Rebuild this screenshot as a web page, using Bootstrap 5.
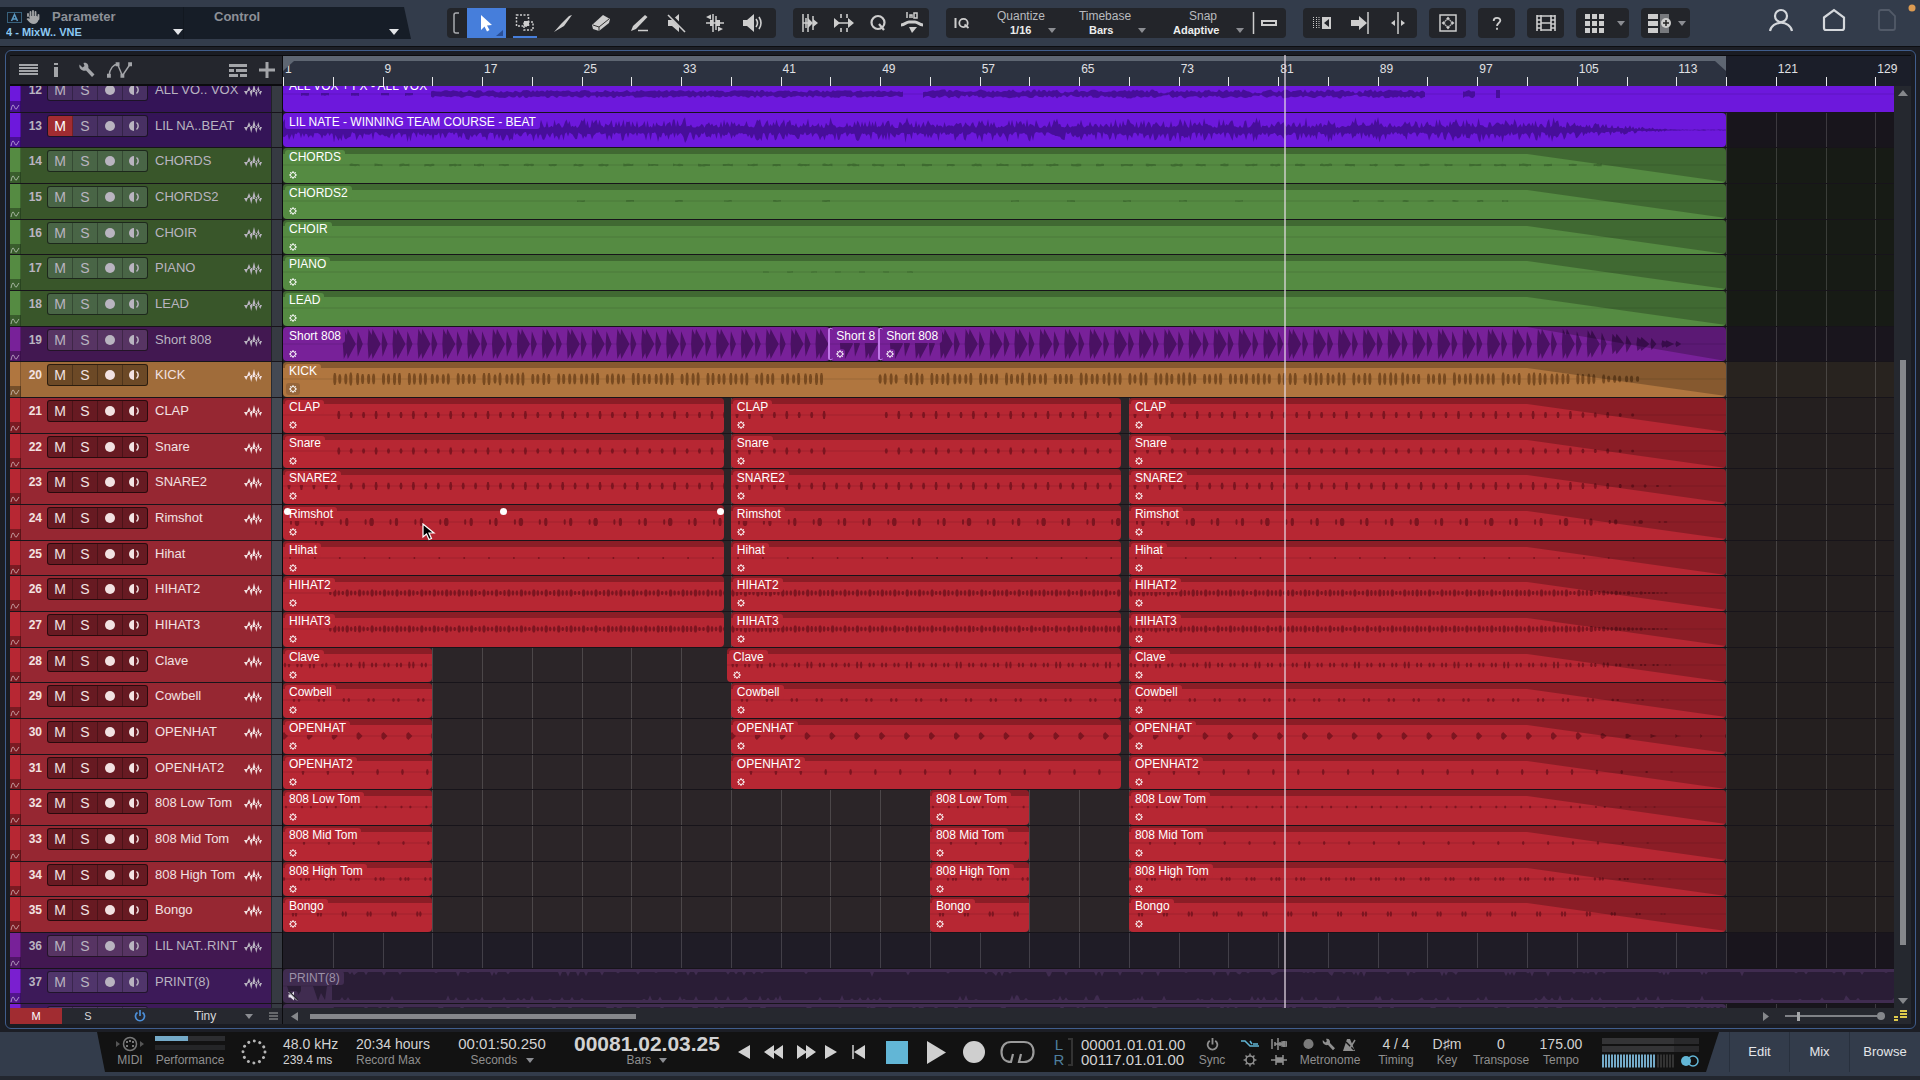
<!DOCTYPE html>
<html lang="en" data-bs-theme="dark">
<head>
<meta charset="utf-8">
<meta name="viewport" content="width=device-width, initial-scale=1">
<title>Arrange view</title>
<link href="https://cdn.jsdelivr.net/npm/bootstrap@5.3.0/dist/css/bootstrap.min.css" rel="stylesheet">
<style>
  body{font-family:"Liberation Sans",Arial,sans-serif;font-size:12px;line-height:16px;background:#1c1e25;color:#c9cbd0;overflow:hidden}
  button,select,input{font-family:inherit;color:inherit}
  button{background:none;border:0;padding:0;display:flex;align-items:center;justify-content:center;flex-shrink:0}
  select{appearance:none;background:none;border:0;padding:0;outline:0;font-size:12px;line-height:16px}
  svg{display:block;flex:none}
  .caret{width:8px;height:5px;fill:#8b8d92}
  /* top bar */
  .topbar{height:47px;background:#333c4b;border-bottom:1px solid #0d0e12;padding-top:8px}
  .parambox{width:411px;height:32px;margin-top:-1px;background:#161d27;clip-path:polygon(0 0,404px 0,100% 100%,0 100%);color:#8d9097;font-weight:bold;font-size:13px}
  .parambox .half{height:32px;padding:2px 0 0 6px}
  .parambox .half:first-child{width:184px;border-right:1px solid #121820}
  .parambox select{font-size:11px;line-height:14px;font-weight:bold;color:#8cc9f2}
  .parambox .caret{fill:#e3e5e8;width:10px;height:6px}
  .toolset{height:30px;background:#23252a;border-radius:4px;color:#cdcdcd;margin-left:17px;flex-shrink:0}
  .toolset.lead-set{margin-left:36px}
  .toolset.solo{margin-left:12px}
  .toolset button{width:38px;height:30px}
  .toolset.narrow button{width:34px}
  .toolset.solo button{width:37px}
  .toolset button.picked{width:39px;background:#467edb;color:#fff}
  .toolset button.next{background:linear-gradient(#467edb,#467edb) bottom/24px 2px no-repeat}
  .pickbox{text-align:center;width:82px}
  .pickbox label{display:block;line-height:14px;height:14px;color:#b9bbbf}
  .pickbox select{font-size:11px;font-weight:bold;color:#eceded;line-height:15px}
  /* panel */
  .frame{flex:1 1 0;margin:3px 4px 3px 5px;border:1px solid #405d8c;border-radius:6px;padding:4px;min-height:0;background:#1a1c23}
  .side{width:273px;border-right:1px solid #0b0b0e;min-height:0}
  .sidehead{height:31px;background:#24262d;border-bottom:2px solid #0b0b0e;border-top:1px solid #0b0b0e;color:#a3a5a9;padding:0 7px 0 9px}
  .listbody{overflow:hidden;min-height:0;flex:1 1 0}
  .listbody .stack{margin-top:-9px}
  .trk,.lane{height:36px;border-bottom:1px solid #17141a}
  .trk:nth-child(3n+2),.lane:nth-child(3n+2){height:35px}
  .trk{display:flex;background:var(--head);color:#b9b4c0}
  .trk.lit{color:#f2e2e2}
  .tag{width:11px;border-right:1px solid #0004;background:linear-gradient(#0000 24px,#0005 24px),var(--clip);padding-top:27px;color:#fff8}
  .num{width:21px;text-align:right;font-weight:bold;line-height:24px;padding-top:1px}
  .btnset{width:101px;height:22px;margin:2px 7px 0 5px;background:var(--box);border:1px solid #0009;border-radius:3px;overflow:hidden}
  .btnset button{flex:1 1 0;font-size:14px;line-height:20px;border-right:1px solid #0004}
  .btnset button:last-child{border-right:0}
  .btnset .on{background:#a12c31;color:#fff}
  .nm{width:89px;font-size:13px;line-height:24px;padding-top:1px;white-space:nowrap}
  .wvi{margin-top:7px}
  .meter{width:11px;background:#363a42;margin-left:auto;border-left:1px solid #0006}
  .lit .meter{background:#444953}
  .status{height:16px;background:#26282f;color:#d7d8da}
  .status button{width:52px;height:16px;font-size:11px}
  .status .on{background:#a12c31;color:#fff}
  /* timeline */
  .ruler{height:31px;background:#1b1e29;border-top:1px solid #0b0b0e;padding-right:17px}
  .looped{background:linear-gradient(#5e6672 5px,#2c3240 5px);position:absolute;top:0;bottom:0;left:0}
  .tick{position:absolute;bottom:0;height:9px;width:1px;background:#e8e8ea}
  .barno{position:absolute;top:5px;padding-left:2px;color:#e0e1e4}
  .lane{position:relative;background:linear-gradient(90deg,var(--in) 0 var(--end),var(--out) var(--end))}
  .gridln{position:absolute;top:0;bottom:0;width:1px;background:#ffffff28}
  .clipbox{position:absolute;top:0;bottom:0;background:var(--clip);border-radius:4px;overflow:hidden;color:#fff}
  .clipbox .wave{position:absolute;left:0;top:0;width:100%;height:35px}
  .clipname{position:absolute;left:2px;top:2px;background:var(--clip);padding:0 4px;border-radius:3px;line-height:14px;white-space:nowrap}
  .gear{position:absolute;left:5px;top:22px;background:var(--clip);border-radius:3px}
  .boxed .gear{background:#966539;left:3px;padding:1px 2px;top:21px}
  .mutedclip{color:#9d91a8}
  .mutedclip .gear{color:#e8e4ec}
  .playhead{position:absolute;top:0;bottom:0;width:2px;background:#e6dae6a0;z-index:5}
  .handle{position:absolute;width:7px;height:7px;border-radius:50%;background:#fff;top:3px;margin-left:-3px;z-index:4}
  .pointer{position:absolute;top:18px;z-index:6}
  .seam{position:absolute;top:1px;bottom:1px;width:5px;margin-left:-2px;border:2px solid #c07ae6;border-width:1px 0 1px 2px;border-radius:2px;z-index:3}
  .vbar{width:17px;background:#25282f}
  .vtrack{width:6px}
  .thumb{background:#85878b}
  .hbar{height:16px;background:#26282f}
  .zoomer{appearance:none;width:92px;height:8px;background:linear-gradient(#808287,#808287) center/100% 2px no-repeat;margin:0}
  .zoomer::-webkit-slider-thumb{appearance:none;width:3px;height:9px;background:#a5a7aa}
  /* transport */
  .transport{height:48px;background:linear-gradient(#333c4b 44px,#23272f 44px)}
  .deck{margin-left:97px;height:40px;width:1622px;background:#121212;clip-path:polygon(0 0,100% 0,calc(100% - 13px) 100%,8px 100%);
    display:grid;align-items:center;justify-items:center;color:#d2d2d2;
    grid-template-columns:58px 70px 58px 73px 84px 124px 166px 28px 30px 32px 22px 34px 42px 37px 37px 51px 38px 108px 46px 30px 28px 74px 58px 44px 64px 56px 1fr}
  .cell{text-align:center;white-space:nowrap}
  .cell>*{height:16px;line-height:16px}
  .cap,.cap select{color:#8f8f8f}
  .val{font-size:14px}
  .clock{font-size:15px}
  .locator>*{height:15px;line-height:15px}
  .bigclock{font-size:21px;font-weight:bold}
  .viewbtn{width:60px;height:40px;border-left:1px solid #28303d;font-size:13px;color:#e4e6e9}
  .viewbtn:last-child{width:71px}
  .perf{width:70px;height:5px;background:linear-gradient(90deg,#74aac8 47%,#2c2d30 47%)}
  .perf.idle{background:#242527}
</style>
<script src="https://cdn.jsdelivr.net/npm/bootstrap@5.3.0/dist/js/bootstrap.bundle.min.js"></script>
</head>
<body class="vh-100 d-flex flex-column">

<svg width="0" height="0" class="position-absolute" aria-hidden="true">
  <symbol id="i-caret" viewBox="0 0 10 6"><path d="M0 0H10L5 6Z"/></symbol>
  <symbol id="i-squig" viewBox="0 0 10 7"><path d="M1 6C2 1 3 0 4 2S6 7 7 4L9 1" fill="none" stroke="currentColor"/></symbol>
  <symbol id="i-wave" viewBox="0 0 18 13"><path d="M0 7H4L2.200 11ZM3 7H7L5 2ZM5.500 6H9L7.200 13ZM8 8H12L10 0ZM10.500 6H14L12.300 13ZM12.500 8H16L14.300 2ZM14.500 7H18L16.200 11Z" fill="currentColor"/></symbol>
  <symbol id="i-mon" viewBox="0 0 12 12"><path d="M5 1A5 5 0 0 0 5 11Z" fill="currentColor"/><path d="M7.500 2.500A4.500 4.500 0 0 1 7.500 9.500" fill="none" stroke="currentColor" stroke-width="1.500"/></symbol>
  <symbol id="i-gear" viewBox="0 0 10 10"><circle cx="5" cy="5" r="2.500" fill="none" stroke="currentColor" stroke-width="1"/><path d="M5 1V2.500M5 7.500V9M1 5H2.500M7.500 5H9M2.200 2.200L3.300 3.300M6.700 6.700L7.800 7.800M7.800 2.200L6.700 3.300M3.300 6.700L2.200 7.800" stroke="currentColor" stroke-width=".9"/></symbol>
  <symbol id="i-mute" viewBox="0 0 20 20"><path d="M1 7H5L12 1V19L5 13H1Z" fill="currentColor"/><path d="M2 1L19 18" stroke="#23252a" stroke-width="3.500"/><path d="M1 2L18 19" stroke="currentColor" stroke-width="1.600"/></symbol>
  <symbol id="i-wrench" viewBox="0 0 16 16"><path d="M1 2.500L4 5.500 6 4 5 1C8 0 10.500 2.500 9.800 6L16 12.500 13.500 15 7.500 8.600C4 9.500 0 7 1 2.500Z" fill="currentColor"/></symbol>
  <symbol id="i-power" viewBox="0 0 12 12"><path d="M3.500 2.500A4.500 4.500 0 1 0 8.500 2.500M6 0V6" fill="none" stroke="currentColor" stroke-width="1.700"/></symbol>
</svg>

<header class="topbar d-flex align-items-start flex-shrink-0">
  <div class="parambox d-flex flex-shrink-0">
    <div class="half">
      <div class="d-flex align-items-center">
        <svg width="16" height="13" viewBox="0 0 16 13" class="me-1"><rect x="1.500" y="1.500" width="14" height="10" fill="none" stroke="#38617c"/><path d="M5.500 10L8.500 3.500L11.500 10M6.500 8H10.500" fill="none" stroke="#5b9ac4" stroke-width="1.500"/></svg>
        <svg width="14" height="14" viewBox="0 0 14 14" class="me-2"><path d="M2 6V4M4.500 7V2M7 7V1M9.500 7V2M12.500 9V5" stroke="#a5a6a8" stroke-width="1.800" stroke-linecap="round"/><path d="M3.500 6H10.500L13 7C13 11 11 14 8 14 5 14 3 12 .5 9L2 8 3.500 9Z" fill="#a5a6a8"/></svg>
        <label for="param" class="ms-1">Parameter</label></div>
      <div class="d-flex align-items-center"><select id="param"><option>4 - MixW.. VNE</option></select><svg class="caret ms-auto"><use href="#i-caret"/></svg></div>
    </div>
    <div class="half flex-fill pe-2"><label for="ctl" class="d-block ps-4">Control</label>
      <div class="d-flex align-items-center pe-1"><select id="ctl" class="flex-fill"><option></option></select><svg class="caret"><use href="#i-caret"/></svg></div></div>
  </div>

  <div class="toolset lead-set d-flex overflow-hidden pe-1">
    <svg width="20" height="30" viewBox="0 0 20 30"><path d="M12 5H9Q7 5 7 7V23Q7 25 9 25H12" fill="none" stroke="#a9abaf" stroke-width="1.500"/></svg>
    <button class="picked" aria-label="Arrow tool"><svg width="39" height="30" viewBox="0 0 39 30"><path d="M14 7L25 17 20 17.500 22.500 22 20 23.500 17.500 18.500 14 22Z" fill="#fff"/><path d="M36 22V28H29Z" fill="#2a4f96"/></svg></button>
    <button class="next" aria-label="Range tool"><svg width="20" height="20" viewBox="0 0 20 20"><path d="M1.500 2H13.500V13H1.500Z" fill="none" stroke="currentColor" stroke-width="1.500" stroke-dasharray="2 1.500"/><path d="M9 9H18V17H9Z" fill="none" stroke="currentColor" stroke-width="1.500" stroke-dasharray="2 1.500"/><path d="M9 8H14V13H9Z" fill="currentColor"/></svg></button>
    <button aria-label="Split tool"><svg width="20" height="20" viewBox="0 0 20 20"><path d="M19 2L11 13 8 11 16 3ZM8 11L11 13 1 19Z" fill="currentColor"/></svg></button>
    <button aria-label="Eraser tool"><svg width="20" height="20" viewBox="0 0 20 20"><path d="M1 12L12 2 19 6 18 10 8 18 2 16Z" fill="currentColor"/><path d="M2 12L8 14 18 6M8 14V18" stroke="#333" fill="none"/></svg></button>
    <button aria-label="Paint tool"><svg width="20" height="20" viewBox="0 0 20 20"><path d="M16 2L18.500 4 7 16 2 18 4 13Z" fill="currentColor"/><path d="M9 17.500H19" stroke="currentColor" stroke-width="1.500"/></svg></button>
    <button aria-label="Mute tool"><svg width="20" height="20"><use href="#i-mute"/></svg></button>
    <button aria-label="Bend tool"><svg width="20" height="20" viewBox="0 0 20 20"><path d="M8 1V19M11 3V17M1 10H19" stroke="currentColor" stroke-width="1.500"/><path d="M1 4L6 1.500V6.500ZM18 16L13 13.500V18.500ZM5 7H8V13H5ZM11 7H15V13H11Z" fill="currentColor"/></svg></button>
    <button aria-label="Listen tool"><svg width="20" height="20" viewBox="0 0 20 20"><path d="M0 7H4L11 1V19L4 13H0Z" fill="currentColor"/><path d="M13 6Q16 10 13 14M16 4Q20 10 16 16" fill="none" stroke="currentColor" stroke-width="1.600"/></svg></button>
  </div>

  <div class="toolset narrow d-flex">
    <button aria-label="Strip silence"><svg width="16" height="20" viewBox="0 0 16 20"><path d="M1 1V19M4 5V15M6 1V19M11 3V17M1 10H9" stroke="currentColor" stroke-width="1.500"/><path d="M6 5L11 10 6 15ZM11 6L16 10 11 14Z" fill="currentColor"/></svg></button>
    <button aria-label="Transients"><svg width="20" height="20" viewBox="0 0 20 20"><path d="M7 1V5M7 15V19M13 1V5M13 15V19M4 10H16" stroke="currentColor" stroke-width="1.600"/><path d="M0 5L6 10 0 15ZM14 5L20 10 14 15Z" fill="currentColor"/></svg></button>
    <button aria-label="Quantize"><svg width="18" height="18" viewBox="0 0 18 18"><circle cx="9" cy="8.500" r="6.500" fill="none" stroke="currentColor" stroke-width="2.200"/><path d="M10 10L15 16" stroke="currentColor" stroke-width="2.200"/></svg></button>
    <button aria-label="Macros"><svg width="24" height="24" viewBox="0 0 24 24"><path d="M1 14C5 14 6 11 9 11H15C18 11 19 14 23 14" fill="none" stroke="currentColor" stroke-width="3"/><path d="M9 16H17L12 22Z" fill="currentColor"/><path d="M7 1V7M10 7V4H12V7M14 2H17V7H14Z" stroke="currentColor" stroke-width="1.500" fill="none"/></svg></button>
  </div>

  <div class="toolset d-flex align-items-center">
    <svg width="16" height="12" viewBox="0 0 16 12" class="ms-2"><path d="M1.500 1V11" stroke="currentColor" stroke-width="2"/><circle cx="9.500" cy="6" r="4.200" fill="none" stroke="currentColor" stroke-width="1.800"/><path d="M10.500 7.500L14.500 11" stroke="currentColor" stroke-width="1.800"/></svg>
    <div class="pickbox ms-2 ps-1"><label for="qz">Quantize</label><div class="d-flex align-items-center"><select id="qz" class="ms-auto"><option>1/16</option></select><svg class="caret ms-3 me-1"><use href="#i-caret"/></svg></div></div>
    <div class="pickbox ms-1"><label for="tb">Timebase</label><div class="d-flex align-items-center"><select id="tb" class="ms-auto"><option>Bars</option></select><svg class="caret ms-4"><use href="#i-caret"/></svg></div></div>
    <div class="pickbox ms-3"><label for="sn">Snap</label><div class="d-flex align-items-center"><select id="sn" class="ms-auto"><option>Adaptive</option></select><svg class="caret ms-3"><use href="#i-caret"/></svg></div></div>
    <button aria-label="Autoscroll" class="me-1"><svg width="28" height="24" viewBox="0 0 28 24"><path d="M4.500 1V23" stroke="currentColor" stroke-width="1.500"/><rect x="13" y="10" width="14" height="4" fill="none" stroke="currentColor" stroke-width="2"/></svg></button>
  </div>

  <div class="toolset d-flex">
    <button aria-label="Ripple"><svg width="20" height="14" viewBox="0 0 20 14"><path d="M1.500 1V13M4.500 1V13M7 1V13" stroke="currentColor" stroke-dasharray="1 1"/><path d="M10 1H19V13H10Z" fill="currentColor"/><path d="M17 3V11L12 7Z" fill="#23252a"/></svg></button>
    <button aria-label="Follow"><svg width="20" height="22" viewBox="0 0 20 22"><path d="M1 8H9V4L17 11 9 18V14H1Z" fill="currentColor"/><path d="M18 0V22" stroke="currentColor" stroke-width="1.500"/></svg></button>
    <button aria-label="Cursor edit"><svg width="16" height="22" viewBox="0 0 16 22"><path d="M8 0V22" stroke="currentColor" stroke-width="1.500"/><path d="M5 8V14L1 11ZM11 8V14L15 11Z" fill="currentColor"/></svg></button>
  </div>
  <div class="toolset solo"><button aria-label="Fit"><svg width="18" height="18" viewBox="0 0 18 18"><rect x="1" y="1" width="16" height="16" fill="none" stroke="currentColor" stroke-width="1.500"/><circle cx="9" cy="9" r="3.500" fill="none" stroke="currentColor"/><path d="M9 2.500L11 5H7ZM9 15.500L11 13H7ZM2.500 9L5 7V11ZM15.500 9L13 7V11Z" fill="currentColor"/></svg></button></div>
  <div class="toolset solo"><button aria-label="Help"><svg width="10" height="15" viewBox="0 0 12 16"><path d="M2 5C2 0 10 0 10 4.500C10 7.500 6 7.500 6 11M6 13V15.500" fill="none" stroke="currentColor" stroke-width="2.200"/></svg></button></div>
  <div class="toolset solo"><button aria-label="Video"><svg width="20" height="18" viewBox="0 0 20 18"><path d="M1 1V17M19 1V17M5 1V17M15 1V17M5 2H15M5 9H15M5 16H15M1 2H5M1 6H5M1 10H5M1 14H5M15 2H19M15 6H19M15 10H19M15 14H19" stroke="currentColor" stroke-width="1.600"/></svg></button></div>
  <div class="toolset solo d-flex align-items-center pe-1"><button aria-label="Grid view"><svg width="19" height="19" viewBox="0 0 19 19"><path d="M0 0H5V5H0ZM7 0H12V5H7ZM14 0H19V5H14ZM0 7H5V12H0ZM7 7H12V12H7ZM14 7H19V12H14ZM0 14H5V19H0ZM7 14H12V19H7ZM14 14H19V19H14Z" fill="currentColor"/></svg></button><svg class="caret ms-1"><use href="#i-caret"/></svg></div>
  <div class="toolset solo d-flex align-items-center pe-1"><button aria-label="Add view"><svg width="24" height="19" viewBox="0 0 24 19"><path d="M0 0H10V5H0ZM0 7H10V12H0ZM0 14H10V19H0Z" fill="currentColor"/><path d="M12 0H21V19H12Z" fill="#77797d"/><circle cx="18" cy="9" r="5" fill="currentColor"/><path d="M18 6V12M15 9H21" stroke="#222" stroke-width="1.500"/></svg></button><svg class="caret"><use href="#i-caret"/></svg></div>
  <nav class="d-flex align-items-center ms-auto gap-4 pe-3 me-1">
    <button aria-label="Account"><svg width="26" height="24" viewBox="0 0 26 24"><circle cx="13" cy="8" r="6" fill="none" stroke="#d5d8dc" stroke-width="2.200"/><path d="M2 23C4 12 22 12 24 23" fill="none" stroke="#d5d8dc" stroke-width="2.200"/></svg></button>
    <button aria-label="Home" class="ms-1"><svg width="24" height="24" viewBox="0 0 24 24"><path d="M2 9.500L12 2 22 9.500V20Q22 22 20 22H4Q2 22 2 20Z" fill="none" stroke="#d5d8dc" stroke-width="2.200"/></svg></button>
    <button aria-label="Song" class="ms-2 me-1"><svg width="18" height="24" viewBox="0 0 18 24"><path d="M1 4Q1 2 3 2H11L17 8V20Q17 22 15 22H3Q1 22 1 20Z" fill="none" stroke="#525a68" stroke-width="1.800"/></svg></button>
  </nav>
  <svg width="8" height="8" viewBox="0 0 8 8" class="position-absolute top-0 end-0 mt-1 me-1"><circle cx="4" cy="4" r="3.500" fill="#dc9b52"/></svg>
</header>

<main class="frame d-flex">
  <section class="side d-flex flex-column flex-shrink-0">
    <div class="sidehead d-flex align-items-center flex-shrink-0">
      <button aria-label="Track list"><svg width="19" height="12" viewBox="0 0 19 12"><path d="M0 1H19M0 4H19M0 7H19M0 10H19" stroke="currentColor" stroke-width="1.800"/></svg></button>
      <button class="ms-3" aria-label="Inspector"><svg width="4" height="14" viewBox="0 0 4 14"><path d="M0 0H4V2H0ZM0 4H4V14H0Z" fill="currentColor"/></svg></button>
      <button class="ms-3 ps-1" aria-label="Tools"><svg width="17" height="16"><use href="#i-wrench"/></svg></button>
      <button class="ms-2 ps-1" aria-label="Automation"><svg width="25" height="16" viewBox="0 0 26 16"><path d="M2 14C3 6 7 2 11 2L16 14L24 2" fill="none" stroke="currentColor" stroke-width="1.500"/><path d="M0 12H4V16H0ZM9 0H13V4H9ZM14 12H18V16H14ZM22 0H26V4H22Z" fill="currentColor"/></svg></button>
      <button class="ms-auto" aria-label="Layers"><svg width="18" height="13" viewBox="0 0 18 13"><path d="M0 1.500H18M0 6.500H5M7 6.500H18M0 11.500H9M11 11.500H18" stroke="currentColor" stroke-width="3"/></svg></button>
      <button class="ms-2 ps-1" aria-label="Add track"><svg width="16" height="16" viewBox="0 0 16 16"><path d="M8 0V16M0 8H16" stroke="currentColor" stroke-width="3"/></svg></button>
    </div>
    <div class="listbody"><div class="stack" id="heads"></div></div>
    <div class="status d-flex align-items-center flex-shrink-0">
      <button class="on">M</button><button>S</button>
      <button aria-label="Enable"><svg width="12" height="12" color="#4c8fd8"><use href="#i-power"/></svg></button>
      <select aria-label="Track size" class="ms-auto me-4"><option>Tiny</option></select>
      <svg class="caret ms-1 me-3"><use href="#i-caret"/></svg><svg width="9" height="8" viewBox="0 0 9 8" class="me-1"><path d="M0 1H9M0 4H9M0 7H9" stroke="#66686c" stroke-width="2"/></svg>
    </div>
  </section>

  <section class="d-flex flex-column flex-fill position-relative">
    <div class="ruler flex-shrink-0"><div class="position-relative h-100" id="ruler"></div></div>
    <div class="d-flex listbody">
      <div class="flex-fill overflow-hidden"><div class="stack" id="lanes"></div></div>
      <div class="vbar d-flex flex-column align-items-center py-1 flex-shrink-0">
        <svg width="10" height="6" viewBox="0 0 10 6"><path d="M0 6H10L5 0Z" fill="#85878b"/></svg>
        <div class="vtrack flex-fill d-flex flex-column pt-2" id="vtrack"></div>
        <svg width="10" height="6" viewBox="0 0 10 6"><use href="#i-caret" fill="#85878b"/></svg>
      </div>
    </div>
    <div class="hbar d-flex align-items-center ps-2 flex-shrink-0">
      <svg width="7" height="9" viewBox="0 0 7 9"><path d="M7 0V9L0 4.500Z" fill="#85878b"/></svg>
      <div class="flex-fill ps-2 ms-1 me-4"><div class="thumb" id="hthumb"></div></div>
      <svg width="6" height="9" viewBox="0 0 6 9" class="me-3"><path d="M0 0V9L6 4.500Z" fill="#85878b"/></svg>
      <input class="zoomer" type="range" min="0" max="100" value="14" aria-label="Zoom"><svg width="8" height="8" viewBox="0 0 8 8" class="me-2"><circle cx="4" cy="4" r="4" fill="#85878b"/></svg>
      <svg width="14" height="12" viewBox="0 0 14 12" class="me-1"><path d="M7 1H14M7 4H14M1 7H5M7 7H14M1 10H5" stroke="#dfca4b" stroke-width="2"/></svg>
    </div>
    <div class="position-absolute top-0 bottom-0 start-0 end-0 mb-3 pe-none"><div class="position-relative h-100" id="overin"></div></div>
  </section>
</main>

<footer class="transport d-flex align-items-start flex-shrink-0">
  <div class="deck">
    <div class="cell cap ps-2"><svg width="28" height="16" viewBox="0 0 28 16"><path d="M0 5L4 8 0 11ZM24 5L28 8 24 11Z" fill="#555"/><circle cx="14" cy="8" r="6.500" fill="none" stroke="#777" stroke-width="1.500"/><path d="M10 9H12V11H10ZM16 9H18V11H16ZM13 4H15V6H13ZM10 5H12V7H10ZM16 5H18V7H16Z" fill="#777"/></svg><div>MIDI</div></div>
    <div class="cell cap"><div class="d-flex flex-column gap-1"><div class="perf"></div><div class="perf idle"></div></div><div>Performance</div></div>
    <svg width="26" height="26" viewBox="0 0 26 26"><circle cx="13" cy="13" r="11" fill="none" stroke="#b5b5b5" stroke-width="3" stroke-linecap="round" stroke-dasharray="0.010 5.750"/></svg>
    <div class="cell text-start w-100"><div class="val">48.0 kHz</div><div>239.4 ms</div></div>
    <div class="cell text-start w-100"><div class="val">20:34 hours</div><div class="cap">Record Max</div></div>
    <div class="cell"><div class="clock">00:01:50.250</div><div class="cap d-flex align-items-center justify-content-center"><select aria-label="Time format"><option>Seconds</option></select><svg class="caret ms-2"><use href="#i-caret"/></svg></div></div>
    <div class="cell"><div class="bigclock">00081.02.03.25</div><div class="cap d-flex align-items-center justify-content-center"><select aria-label="Position format"><option>Bars</option></select><svg class="caret ms-2"><use href="#i-caret"/></svg></div></div>
    <button aria-label="Previous"><svg width="12" height="14" viewBox="0 0 12 14"><path d="M12 0V14L0 7Z" fill="currentColor"/></svg></button>
    <button aria-label="Rewind"><svg width="19" height="14" viewBox="0 0 19 14"><path d="M10 0V14L0 7ZM19 0V14L9 7Z" fill="currentColor"/></svg></button>
    <button aria-label="Forward" class="ms-1"><svg width="19" height="14" viewBox="0 0 19 14"><path d="M0 0V14L10 7ZM9 0V14L19 7Z" fill="currentColor"/></svg></button>
    <button aria-label="Next"><svg width="12" height="14" viewBox="0 0 12 14"><path d="M0 0V14L12 7Z" fill="currentColor"/></svg></button>
    <button aria-label="Return to zero"><svg width="14" height="14" viewBox="0 0 14 14"><path d="M1 0V14" stroke="currentColor" stroke-width="1.500"/><path d="M13 0V14L2 7Z" fill="currentColor"/></svg></button>
    <button aria-label="Stop"><svg width="22" height="23" viewBox="0 0 22 23"><path d="M0 0H22V23H0Z" fill="#62b6d6"/></svg></button>
    <button aria-label="Play"><svg width="19" height="23" viewBox="0 0 19 23"><path d="M0 0L19 11.500 0 23Z" fill="#cfcfcf"/></svg></button>
    <button aria-label="Record"><svg width="22" height="22" viewBox="0 0 22 22"><circle cx="11" cy="11" r="11" fill="#cfcfcf"/></svg></button>
    <button aria-label="Loop"><svg width="35" height="24" viewBox="0 0 35 24"><path d="M13 14L11 22C5 22 1.500 18 1.500 12S5 2 11 2H24C30 2 33.500 6 33.500 12S30 22 24 22H19L21 14" fill="none" stroke="#9b9b9b" stroke-width="2.200"/></svg></button>
    <div class="d-flex align-items-center ms-1"><div class="cell clock locator" style="color:#4f7f9e"><div class="me-1">L</div><div class="me-1">R</div></div><svg width="6" height="28" viewBox="0 0 6 28"><path d="M0 1H4V27H0" fill="none" stroke="#333" stroke-width="2"/></svg></div>
    <div class="cell clock locator text-start w-100"><div>00001.01.01.00</div><div>00117.01.01.00</div></div>
    <div class="cell cap"><div class="d-flex justify-content-center align-items-center"><svg width="13" height="13"><use href="#i-power"/></svg></div><div>Sync</div></div>
    <div class="cell"><svg width="18" height="16" viewBox="0 0 18 16"><path d="M0 5H4L9 10H18M9 5L11 8M12 8H17" fill="none" stroke="#62b6d6" stroke-width="1.500"/></svg><svg class="mx-auto" width="16" height="16" viewBox="0 0 10 10" color="#8f8f8f"><use href="#i-gear" width="10" height="10"/></svg></div>
    <div class="cell"><svg width="16" height="16" viewBox="0 0 16 16"><path d="M1 3V13M4 6V10M7 2V14M4 8H16M9 6V10M13 5V11M11 6H16V10H11Z" stroke="#8f8f8f" stroke-width="1.500"/></svg><svg width="16" height="16" viewBox="0 0 16 16"><path d="M0 8H18M5 3V13M12 3V13M5 6H12V10H5Z" stroke="#8f8f8f" stroke-width="1.500" fill="#8f8f8f"/></svg></div>
    <div class="cell cap"><div class="d-flex gap-2 justify-content-center align-items-center"><svg width="11" height="12" viewBox="0 0 12 12"><circle cx="6" cy="6" r="5.500" fill="#7b7b7b"/></svg><svg width="13" height="13"><use href="#i-wrench"/></svg><svg width="13" height="13" viewBox="0 0 13 13"><path d="M4 1H7L12 13H0Z" fill="currentColor"/><path d="M3 4L11 12" stroke="#121212" stroke-width="1.500"/><path d="M12 2L7 10" stroke="currentColor" stroke-width="1.500"/></svg></div><div>Metronome</div></div>
    <div class="cell"><div class="val">4 / 4</div><div class="cap">Timing</div></div>
    <div class="cell"><div class="val">D♯m</div><div class="cap">Key</div></div>
    <div class="cell"><div class="val">0</div><div class="cap">Transpose</div></div>
    <div class="cell"><div class="val">175.00</div><div class="cap">Tempo</div></div>
    <svg width="97" height="32" viewBox="0 0 97 32" class="me-2"><path d="M0 2H97V8H0ZM0 10H97V16H0Z" fill="#29292b"/><path d="M0 2H72V8H0ZM0 10H72V16H0Z" fill="#343436"/><path d="M0 25H54" stroke="#74aac8" stroke-width="13" stroke-dasharray="2 1"/><path d="M55 25H72" stroke="#333" stroke-width="13" stroke-dasharray="2 1"/><circle cx="84" cy="25" r="5" fill="#62b6d6"/><circle cx="91" cy="25" r="5" fill="none" stroke="#62b6d6" stroke-width="1.500"/></svg>
  </div>
  <div class="d-flex ms-auto"><button class="viewbtn">Edit</button><button class="viewbtn">Mix</button><button class="viewbtn">Browse</button></div>
</footer>

<script>
// one bar of the song in drawing units, and how many bars the window shows
const BAR = 12.44, SHOWN = 129.5, LAST = 117;
const pct = b => ((b - 1) / SHOWN * 100).toFixed(3) + '%';
const X = b => (b - 1) * BAR;

const kinds = {
  violet:{clip:'#6d18dc',head:'#341457',box:'#483063',in:'#1f1c26',out:'#18151c'},
  green:{clip:'#558b42',head:'#39562a',box:'#496546',in:'#20261e',out:'#171b15'},
  purple:{clip:'#782199',head:'#421851',box:'#573463',in:'#1f1c26',out:'#19151d'},
  orange:{clip:'#b0763f',head:'#a06c3a',box:'#6c4926',in:'#2c2722',out:'#28231f',lit:1},
  red:{clip:'#b72733',head:'#962732',box:'#671a22',in:'#2b2528',out:'#241f1f',lit:1},
  print:{clip:'#7a1fd0',head:'#3d1a59',box:'#50356b',in:'#1f1c26',out:'#18151c',face:'#402c50'}
};
const full=[[1,LAST]], three=[[1,36.45],[37,68.4],[69,LAST]],
      four=[[1,13],[37,68.4],[69,LAST]], toms=[[1,13],[53,61],[69,LAST]];
const tracks = [
  [12,'ALL VO.. VOX','violet',[[1,131]],'vox','ALL VOX + FX - ALL VOX'],
  [13,'LIL NA..BEAT','violet',full,'beat','LIL NATE - WINNING TEAM COURSE - BEAT'],
  [14,'CHORDS','green',full,'dash'],[15,'CHORDS2','green',full,'dash2'],
  [16,'CHOIR','green',full,'none'],[17,'PIANO','green',full,'piano'],[18,'LEAD','green',full,'none'],
  [19,'Short 808','purple',[[1,45],[45,49,'Short 8'],[49,LAST]],'bass'],
  [20,'KICK','orange',full,'kick'],
  [21,'CLAP','red',three,'clap'],[22,'Snare','red',three,'snare'],[23,'SNARE2','red',three,'snare2'],
  [24,'Rimshot','red',three,'rim'],[25,'Hihat','red',three,'hat'],[26,'HIHAT2','red',three,'hat2'],
  [27,'HIHAT3','red',three,'hat2'],
  [28,'Clave','red',[[1,13],[36.7,68.4],[69,LAST]],'clave'],[29,'Cowbell','red',four,'bell'],
  [30,'OPENHAT','red',four,'open'],[31,'OPENHAT2','red',four,'open2'],
  [32,'808 Low Tom','red',toms,'tom'],[33,'808 Mid Tom','red',toms,'mid'],
  [34,'808 High Tom','red',toms,'high'],[35,'Bongo','red',toms,'bongo'],
  [36,'LIL NAT..RINT','purple',[],'none'],
  [37,'PRINT(8)','print',[[1,131]],'print'],
  [38,'','print',[[1,LAST]],'print','']
];

let seed = 7;
const rnd = () => (seed = (seed * 16807) % 2147483647) / 2147483647;
const fade = x => x < X(105) ? 1 : Math.max(0, 1 - (x - X(105)) / (X(114) - X(105)));
const C = 17;
const n = v => +v.toFixed(1);
const hit = (x, a, w) => a < .3 ? '' : `M${n(x-w/2)} ${n(C-a)}H${n(x+w/2)}L${n(x+w)} ${C}L${n(x+w/2)} ${n(C+a)}H${n(x-w/2)}L${n(x-w)} ${C}Z`;
const lens = (x, a, w) => a < .5 ? '' : `M${n(x-w/2)} ${n(C-a)}H${n(x+w/2)}L${n(x+w)} ${n(C-a/2)}V${n(C+a/2)}L${n(x+w/2)} ${n(C+a)}H${n(x-w/2)}L${n(x-w)} ${n(C+a/2)}V${n(C-a/2)}Z`;
function band(x0, x1, step, amp){
  const up = [], dn = [];
  for (let x = x0; x <= x1; x += step){ up.push(`${n(x)} ${n(C-amp(x))}`); dn.unshift(`${n(x)} ${n(C+amp(x))}`); }
  return 'M' + up.concat(dn).join('L') + 'Z';
}
const every = (s, e, gap, offs, fn) => { let d = '', k = 0;
  for (let x = 0; x < e + gap; x += gap, k++) for (const o of offs){ const p = x + o; if (p >= s - 2 && p <= e + 2) d += fn(p, k, o); } return d; };
const hole = x => x > X(44.6) && x < X(49);
const draw = {
  none: () => '',
  vox: () => [18,38,68,98,122].map(x => band(x, x+8, 2, () => 1 + rnd())).join('') +
      band(148, 620, 2, x => 1.5 + rnd()*2.5) + band(640, 1142, 2, x => (x%97<14 ? .3 : 1.5) + rnd()*3) +
      band(1180,1192,2,()=>2+rnd()*2) + band(1213,1217,1,()=>4),
  beat: (s, e) => band(s, e, 1.5, x => (2 + (rnd() > .45 ? 9 : 3) * rnd() + (x % 24.88 < 4 ? 2 : 0)) * (x > X(103) ? Math.max(.04, 1-(x-X(103))/130) : 1)),
  dash: (s, e) => every(60, X(107), 24.88, [0], x => band(x-8, x+1+rnd()*4, 2, () => .6 + rnd()*.8)),
  dash2: (s, e) => every(250, 540, 49, [0], x => band(x, x+9, 2, () => .4+rnd()*.6)) + every(730, 980, 56, [0], x => band(x, x+9, 2, () => .4+rnd()*.5)) + every(1050, 1240, 24.88, [0], x => band(x, x+6, 2, () => .4+rnd()*.6)),
  piano: () => every(470, 640, 24, [0], x => band(x, x+6, 2, () => .3+rnd()*.4)),
  bass: (s, e) => every(Math.max(s,50), e, 24.88, [10], x => { const f = fade(x), a = 15*f;
      return f < .05 ? '' : `M${n(x)} ${C}L${n(x+1)} ${n(C-a)}L${n(x+4)} ${n(C-a*.6)}L${n(x+5)} ${n(C-a)}L${n(x+9)} ${n(C-a*.5)}L${n(x+13)} ${C}L${n(x+9)} ${n(C+a*.5)}L${n(x+5)} ${n(C+a)}L${n(x+4)} ${n(C+a*.6)}L${n(x+1)} ${n(C+a)}Z` +
      `M${n(x+14)} ${C}L${n(x+15)} ${n(C-a*.85)}L${n(x+20)} ${C}L${n(x+15)} ${n(C+a*.85)}Z`; }),
  kick: (s, e) => every(48, X(110), 24.88, [0,5,11,16], (x, k) => hole(x) ? '' : lens(x + (k%3), (4.5 + rnd()*2)*fade(x), 1.5)),
  clap: (s, e) => every(Math.max(s, 50), X(110), 12.44, [6], (x, k) => hole(x) ? '' : hit(x, (3+(k%3==1))*fade(x), 1.6)),
  snare: (s, e) => every(Math.max(s, 50), X(110), 12.44, [6], (x, k) => hole(x) ? '' : hit(x, (2.4+(k%3==1))*fade(x), 1.6)),
  snare2: (s, e) => every(s, e, 12.44, [6], (x, k) => hit(x, (3.2+(k%3==1)*.8)*fade(x), 1.6)),
  rim: (s, e) => every(s, e, 24.88, [8, 14], (x, k, o) => lens(x, (o > 12 ? 4 : 2.8)*fade(x), o > 12 ? (k%3 ? 1.6 : 2.2) : 1)),
  hat: (s, e) => every(s, e, 24.88, [7], x => hit(x, 1*fade(x), 1)),
  hat2: (s, e) => every(s < 40 ? 46 : s, e, 12.44, [2, 6, 10], (x, k, o) => lens(x, (o == 2 ? 3.4 : 2 + rnd())*fade(x), o == 2 ? 1.6 : 1.2)),
  clave: (s, e) => every(s, e, 12.44, [2, 6], (x, k) => hit(x, (2.3+(k%4==2))*fade(x), 1.3)),
  bell: (s, e) => every(s, e, 24.88, [11, 16], x => hit(x, 1.8*fade(x), 1.4)),
  open: (s, e) => every(s, e, 24.88, [1], x => `M${n(x-2)} ${C-2}L${n(x)} ${n(C-4*fade(x))}L${n(x+4)} ${C}L${n(x)} ${n(C+4*fade(x))}L${n(x-2)} ${C+2}Z`),
  open2: (s, e) => every(s, e, 24.88, [20], x => hit(x, 2.8*fade(x), 1.4)),
  tom: (s, e) => every(s, e, 24.88, [3, 19], x => hit(x, 1.2*fade(x), 1.2)),
  mid: (s, e) => every(s, e, 24.88, [21], x => hit(x, 1.7*fade(x), 1.3)),
  high: (s, e) => every(s, e, 24.88, [1, 18, 23], x => hit(x, 1.8*fade(x), 1.3)),
  bongo: (s, e) => every(s, e, 24.88, [10, 13], x => hit(x, 2.6*fade(x), 1.3)),
  print: (s, e) => `M4 ${C}H18V22L12 30V24L8 29Z` + `M30 ${C}H44L42 31L38 24L35 32Z` + band(49, e, 2, x => rnd() > .88 ? 9 + rnd()*4 : 14)
};
const shade = {violet:'#470e9a',green:'#3e6a30',purple:'#4a1163',orange:'#784a20',red:'#7c1520',print:'#2a1d36'};

const use = (id, w, h = w) => `<svg width="${w}" height="${h}"><use href="#${id}"/></svg>`;
heads.innerHTML = tracks.map(([no, name, k]) => { const c = kinds[k];
  return `<div class="trk ${c.lit ? 'lit' : ''}" style="--clip:${c.clip};--head:${c.head};--box:${c.box}">
    <div class="tag">${use('i-squig', 10, 7)}</div><div class="num">${name ? no : ''}</div>
    <div class="btnset d-flex"><button class="${no == 13 ? 'on' : ''}">${name ? 'M' : ''}</button><button>${name ? 'S' : ''}</button>
    <button aria-label="Record arm"><svg width="10" height="10" viewBox="0 0 10 10"><circle cx="5" cy="5" r="5" fill="currentColor"/></svg></button>
    <button aria-label="Monitor">${use('i-mon', 12)}</button></div>
    <div class="nm">${name}</div><div class="wvi">${use('i-wave', 18, 13)}</div><div class="meter"></div></div>`; }).join('');

let lines = '';
for (let b = 5; b < 131; b += 4) lines += `<i class="gridln" style="left:${pct(b)}"></i>`;
lanes.innerHTML = tracks.map(([no, name, k, clips, kind, label]) => { const c = kinds[k];
  const env = k == 'green' || k == 'orange' || k == 'red';
  const body = clips.map(([a, b, short]) => { const s = X(a), e = X(b), tail = b == LAST && (env || kind == 'bass');
    const top = kind == 'bass' ? 0 : 6;
    const dark = tail ? `M${n(s)} 0H${n(e)}V34L${n(X(101))} ${top}H${n(s)}Z` : env ? `M${n(s)} 0H${n(e)}V6H${n(s)}Z` : '';
    const muted = k == 'print', text = short ?? label ?? name;
    return `<div class="clipbox ${muted ? 'mutedclip' : ''} ${no == 20 ? 'boxed' : ''}" style="left:${pct(a)};width:${pct(b - a + 1)}${muted ? ';--clip:' + c.face : ''}">
      <svg class="wave" viewBox="${n(s)} 0 ${n(e - s)} 35" preserveAspectRatio="none"><path d="M${n(s)} ${C}H${n(e)}" stroke="#000" stroke-opacity=".12"/>
      <path d="${draw[kind](s, e)}" fill="${shade[k]}"/><path d="${dark}" fill="#000" fill-opacity=".24"/></svg>
      ${text ? `<span class="clipname">${text}</span>` : ''}
      ${no > 13 && text ? `<span class="gear">${use(muted ? 'i-mute' : 'i-gear', 10)}</span>` : ''}</div>`; }).join('');
  const extra = kind == 'bass' ? [45, 49].map(b => `<i class="seam" style="left:${pct(b)}"></i>`).join('') :
    no == 24 ? [1.3, 18.7, 36.1].map(b => `<i class="handle" style="left:${pct(b)}"></i>`).join('') : '';
  return `<div class="lane" style="--in:${c.in};--out:${c.out};--end:${pct(LAST)};--clip:${c.clip}">${lines}${body}${extra}</div>`; }).join('');

let r = `<div class="looped" style="width:${pct(LAST)}"></div>`;
for (let b = 1; b < 130; b += 4){ r += `<i class="tick" style="left:${pct(b)}"></i>`;
  if (b % 8 == 1) r += `<span class="barno" style="left:${pct(b)}">${b}</span>`; }
r += `<svg class="position-absolute top-0 mt-1" style="left:${pct(LAST - .9)}" width="11" height="11" viewBox="0 0 11 11"><path d="M0 1H11V11Z" fill="#5e6672"/></svg>`;
r += `<svg class="position-absolute top-0 start-0 mt-1" width="11" height="11" viewBox="0 0 11 11"><path d="M0 1H11L0 11Z" fill="#5e6672"/></svg>`;
ruler.innerHTML = r;

overin.innerHTML = `<div class="position-absolute top-0 bottom-0 start-0 end-0 me-3"><i class="playhead" style="left:${pct(81.4)}"></i></div>`;
lanes.children[12].insertAdjacentHTML('beforeend', `<svg class="pointer" style="left:${pct(12.2)}" width="14" height="18" viewBox="0 0 14 18"><path d="M1 1V14L4.500 11L7 16.500L9.500 15.500L7 10L12 10Z" fill="#000" stroke="#fff" stroke-width="1.200"/></svg>`);
vtrack.innerHTML = '<div style="height:28.600%"></div><div class="thumb" style="height:65.500%"></div>';
hthumb.style.cssText = 'height:5px;width:22.800%';
</script>
</body>
</html>
